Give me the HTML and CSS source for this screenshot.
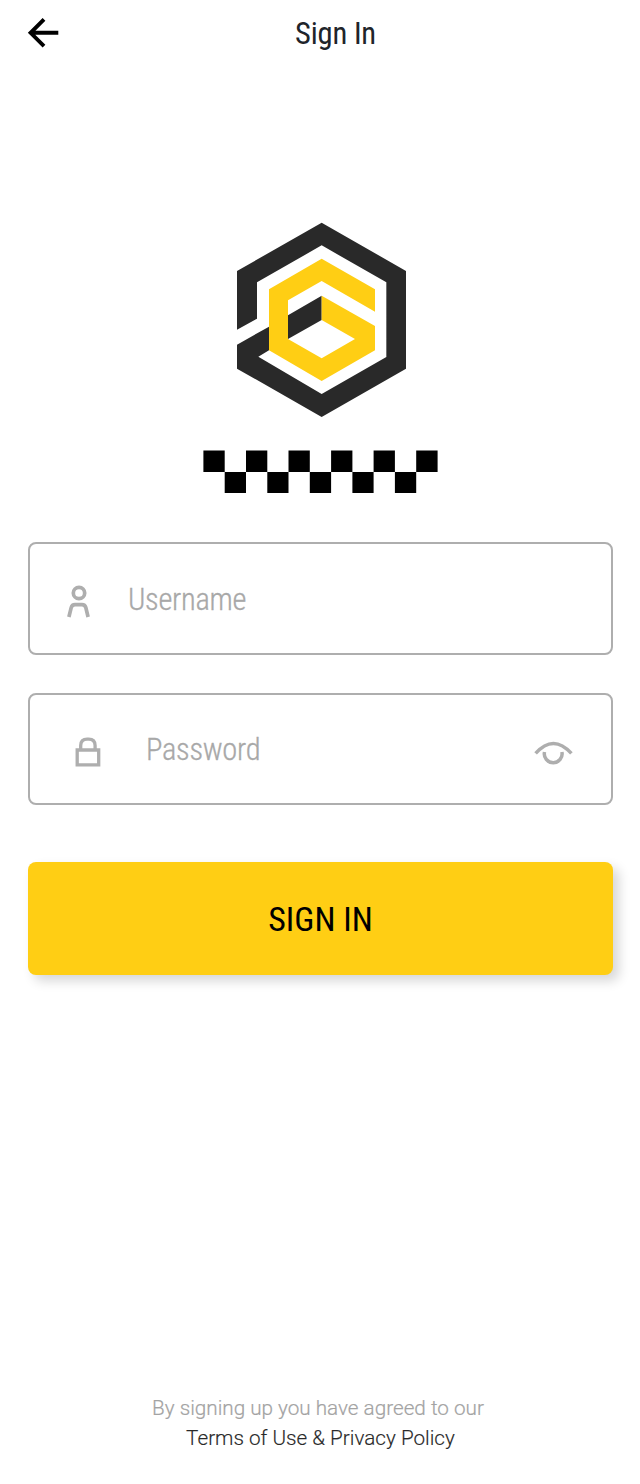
FILE: index.html
```
<!DOCTYPE html>
<html lang="en">
<head>
<meta charset="utf-8">
<title>Sign In</title>
<link rel="stylesheet" href="styles.css">
</head>
<body>
<main class="screen">
  <header class="topbar">
    <button class="back" type="button" aria-label="Back">
      <svg width="34" height="34" viewBox="0 0 34 34"><path d="M33.3 16.8H6M19 3.4L5.6 16.8L19 30.2" fill="none" stroke="#000" stroke-width="3.9"/></svg>
    </button>
    <h1 class="title">Sign In</h1>
  </header>
  <div class="brand">
    <svg class="logo" width="170" height="196" viewBox="51 36 510 588">
      <path fill="#292929" d="M305 38L558 183V476L305 621L51 476V404L147 350V421L115 440L305 552L499 441V217L305 106L111 217V326L51 359V183ZM204 316L305 257V330L204 387Z"/>
      <path fill="#ffce14" d="M305 146L465 238V305L305 213L204 271V387L305 445L405 387L305 330V257L465 348V421L305 513L147 421V238Z"/>
    </svg>
    <svg class="checks" width="236" height="44" viewBox="203 450 236 44">
      <path d="M203.4 450.5h21.3v21.4h-21.3zM246 450.5h21.3v21.4H246zM288.5 450.5h21.3v21.4h-21.3zM331.1 450.5h21.3v21.4h-21.3zM373.6 450.5h21.3v21.4h-21.3zM416.2 450.5h21.4v21.4h-21.4zM224.7 471.9H246V493h-21.3zM267.3 471.9h21.2V493h-21.2zM309.8 471.9h21.3V493h-21.3zM352.4 471.9h21.2V493h-21.2zM394.9 471.9h21.3V493h-21.3z"/>
    </svg>
  </div>
  <form class="form">
    <div class="field">
      <svg class="user-icon" width="24" height="34" viewBox="0 0 24 34" fill="none" stroke="#aeaeae" stroke-width="3.7"><circle cx="12" cy="9" r="5.7"/><path d="M1.9 33L4.2 23.6Q5 20.6 8 20.6H15Q18 20.6 18.8 23.6L21.1 33"/></svg>
      <span class="placeholder user-label">Username</span>
    </div>
    <div class="field">
      <svg class="lock-icon" width="26" height="32" viewBox="0 0 26 32" fill="none" stroke="#aeaeae" stroke-width="3.3"><path d="M2.2 14H23.7V28.9H2.2ZM5.7 14V9.5Q5.7 3.1 12.1 3.1H13.7Q20.1 3.1 20.1 9.5V14"/></svg>
      <span class="placeholder pass-label">Password</span>
      <svg class="eye-icon" width="40" height="24" viewBox="0 0 40 24" fill="none" stroke="#aeaeae" stroke-width="3.5"><path d="M1.6 12.4Q19.3-7.6 37.4 12.4M10.5 11A8.9 8.9 0 1 0 27.9 11"/></svg>
    </div>
    <button class="submit" type="button"><span class="submit-label">SIGN IN</span></button>
  </form>
  <footer class="legal">
    <p class="note">By signing up you have agreed to our</p>
    <p class="terms">Terms of Use &amp; Privacy Policy</p>
  </footer>
</main>
</body>
</html>
```
FILE: styles.css
```
* { box-sizing: border-box; }
body { margin: 0; background: #fff; font-family: Roboto, sans-serif; }
.screen { width: 640px; height: 1484px; padding: 0 27px 0 28px; display: flex; flex-direction: column; }
.topbar { height: 66px; display: grid; grid-template-columns: 34px 1fr 4px; align-items: center; }
.back { border: 0; padding: 0; background: none; width: 34px; height: 34px; margin-left: -3px; }
.back svg { display: block; }
.title, .placeholder, .submit-label { font-family: "Roboto Condensed", Roboto, sans-serif; font-stretch: 75%; white-space: nowrap; }
.title { margin: 0; font-size: 30.5px; letter-spacing: -.15px; font-weight: 400; line-height: 68px; height: 66px; color: #20242a; text-align: center; }
.brand { padding-top: 156px; height: 476px; display: flex; flex-direction: column; align-items: center; }
.logo { margin-left: 3px; flex: none; }
.checks { margin-top: 32px; margin-left: 1px; flex: none; }
.form { display: flex; flex-direction: column; }
.field { height: 112.5px; margin-bottom: 38px; border: 2px solid #aeaeae; border-radius: 8px; display: flex; align-items: center; }
.user-icon { margin: 5px 0 0 37px; }
.lock-icon { margin: 7px 0 0 45px; }
.placeholder { padding-top: 3px; font-size: 30.5px; letter-spacing: -.3px; font-weight: 300; -webkit-text-stroke: .3px #a8a8a8; color: #a8a8a8; line-height: 40px; }
.user-label { margin-left: 37px; }
.pass-label { margin-left: 45px; }
.eye-icon { margin: 9px 37px 0 auto; }
.submit { height: 113px; margin-top: 19px; border: 0; border-radius: 8px; background: #ffce14; box-shadow: 6px 6px 12px rgba(0,0,0,.16); padding: 1px 0 0; }
.submit-label { font-size: 34px; font-weight: 400; color: #000; }
.legal { margin-top: auto; padding-bottom: 31px; text-align: center; font-size: 20.7px; font-weight: 300; line-height: 30px; }
.note, .terms { margin: 0; white-space: nowrap; }
.note { padding-right: 5px; color: #a3a3a3; -webkit-text-stroke: .2px #a3a3a3; }
.terms { color: #292929; -webkit-text-stroke: .15px #292929; }
```
